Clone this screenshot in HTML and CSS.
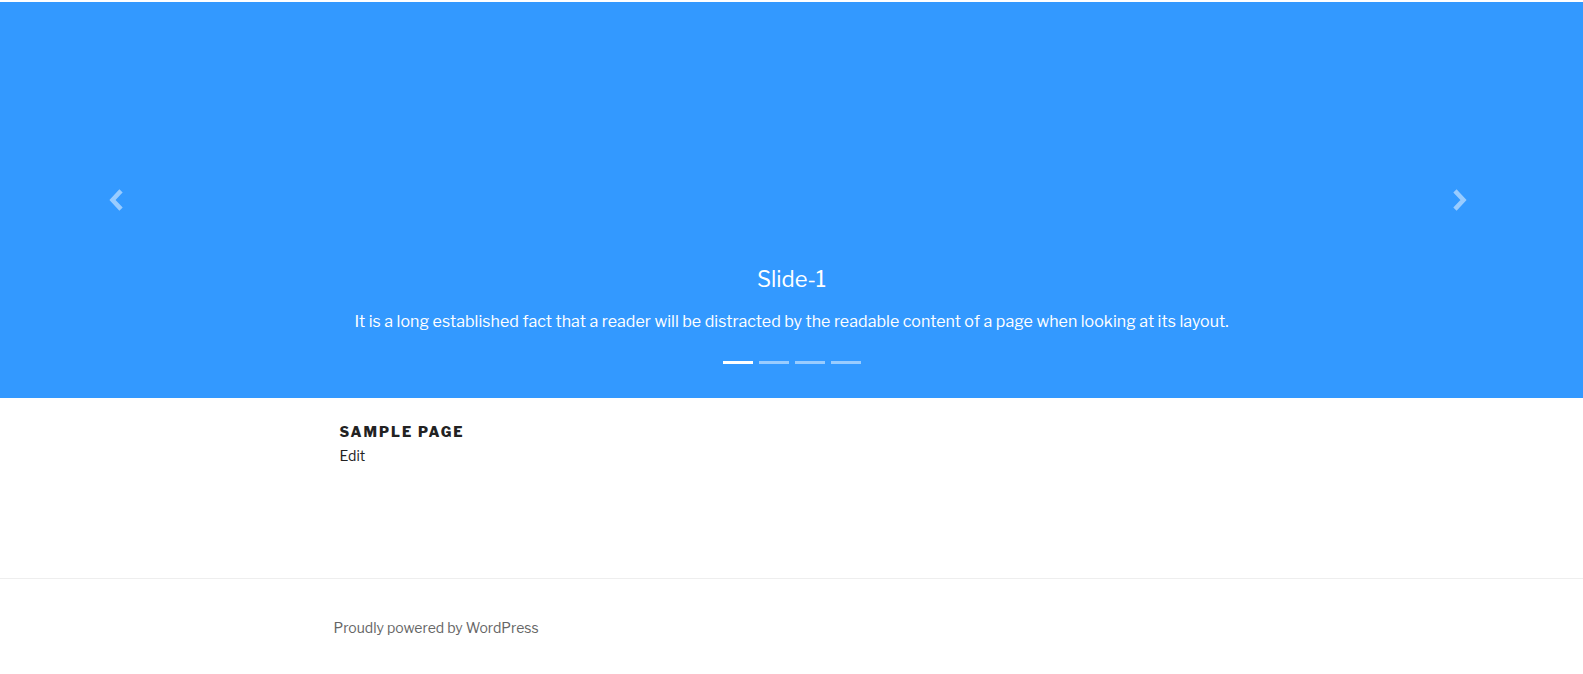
FILE: index.html
```html
<!DOCTYPE html>
<html lang="en">
<head>
<meta charset="utf-8">
<title>Sample Page</title>
<link rel="stylesheet" href="styles.css">
</head>
<body>
<div class="page">
  <section class="carousel">
    <a class="control prev" href="#" aria-label="Previous">
      <svg width="16" height="22" viewBox="0 0 16 22"><polyline points="11.5,3.5 4.5,11 11.5,18.5" fill="none" stroke="currentColor" stroke-width="4.5" stroke-linecap="square" stroke-linejoin="miter"/></svg>
    </a>
    <a class="control next" href="#" aria-label="Next">
      <svg width="16" height="22" viewBox="0 0 16 22"><polyline points="4.5,3.5 11.5,11 4.5,18.5" fill="none" stroke="currentColor" stroke-width="4.5" stroke-linecap="square" stroke-linejoin="miter"/></svg>
    </a>
    <div class="caption">
      <h3 class="slide-title">Slide-1</h3>
      <p class="slide-text">It is a long established fact that a reader will be distracted by the readable content of a page when looking at its layout.</p>
    </div>
    <ol class="indicators">
      <li class="active"></li>
      <li></li>
      <li></li>
      <li></li>
    </ol>
  </section>

  <main class="content">
    <div class="wrap">
      <h2 class="entry-title">Sample Page</h2>
      <a class="edit-link" href="#">Edit</a>
    </div>
  </main>

  <footer class="site-footer">
    <div class="wrap footer-wrap">
      <a class="site-info" href="#">Proudly powered by WordPress</a>
    </div>
  </footer>
</div>
</body>
</html>
```
FILE: styles.css
```css
html, body {
  margin: 0;
  padding: 0;
  background: #fff;
}

body {
  font-family: "Libre Franklin", Roboto, "Liberation Sans", sans-serif;
  color: #222;
  font-size: 15px;
}

.page {
  padding-top: 2px;
}

.carousel {
  position: relative;
  height: 396px;
  background: #3399ff;
  display: flex;
  flex-direction: column;
  justify-content: flex-end;
  align-items: center;
  color: #fff;
}

.control {
  position: absolute;
  top: 187px;
  color: rgba(255, 255, 255, 0.5);
  display: block;
  line-height: 0;
}

.control.prev {
  left: 108px;
}

.control.next {
  left: 1452px;
}

.caption {
  text-align: center;
  padding-bottom: 27px;
}

.slide-title {
  margin: 0;
  font-size: 22px;
  font-weight: 400;
  line-height: 30px;
}

.slide-text {
  margin: 16px 0 0;
  font-size: 16px;
  line-height: 24px;
  letter-spacing: 0.04px;
}

.indicators {
  list-style: none;
  margin: 0 0 34px;
  padding: 0;
  display: flex;
  gap: 6px;
}

.indicators li {
  width: 30px;
  height: 3px;
  background: rgba(255, 255, 255, 0.5);
}

.indicators li.active {
  background: #fff;
}

.wrap {
  max-width: 1000px;
  margin: 0 auto;
  padding: 0 48px;
  box-sizing: border-box;
}

.content {
  padding-top: 24px;
  height: 180px;
  box-sizing: border-box;
}

.entry-title {
  margin: 0;
  font-size: 14px;
  font-weight: 800;
  letter-spacing: 0.14em;
  text-transform: uppercase;
  color: #222;
  line-height: 20px;
}

.edit-link {
  display: inline-block;
  margin-top: 4px;
  font-size: 14px;
  line-height: 20px;
  color: #222;
  text-decoration: none;
}

.site-footer {
  border-top: 1px solid #eee;
  padding-top: 38px;
}

.footer-wrap {
  padding-left: 42px;
}

.site-info {
  font-size: 14px;
  line-height: 22px;
  color: #666;
  text-decoration: none;
}
```
